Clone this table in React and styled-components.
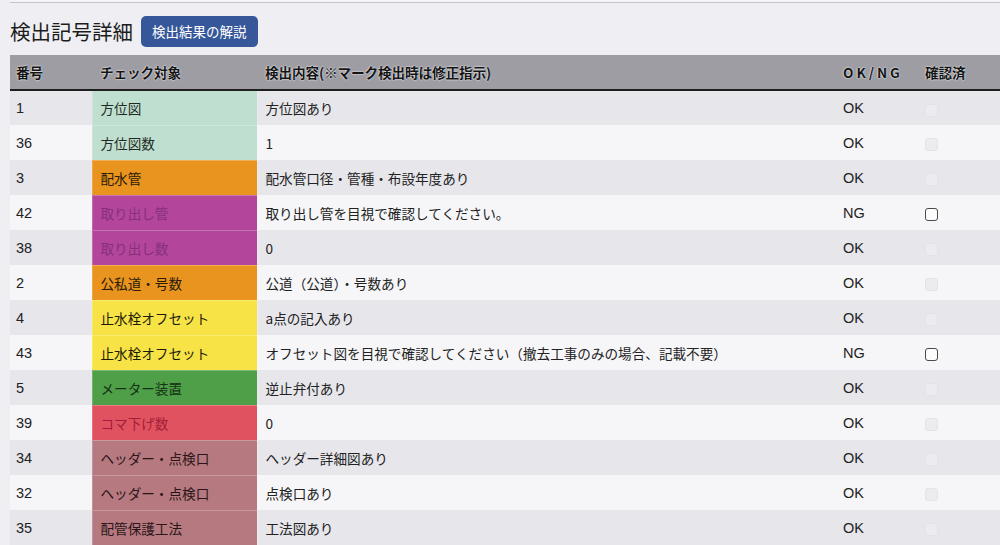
import React from 'react'
import styled, { createGlobalStyle } from 'styled-components'

const GlobalStyle = createGlobalStyle`
    body {
        margin: 0;
        background: #efeff3;
        font-family: "Noto Sans CJK JP", "Noto Sans", sans-serif;
        color: #222;
    }
`

const Page = styled.div`
    width: 1000px;
    height: 545px;
    overflow: hidden;
`

const TopPanel = styled.div`
    height: 2px;
    margin-left: 10px;
    border-bottom: 1px solid #c4c4ca;
    background: #f4f4f7;
`

const TitleBar = styled.div`
    display: flex;
    align-items: center;
    gap: 8px;
    height: 36px;
    margin: 10px 0 6px 10px;
`

const Title = styled.h2`
    margin: 0;
    font-size: 20.5px;
    font-weight: 400;
    color: #1c1c1c;
`

const ExplainButton = styled.button`
    height: 31px;
    padding: 0 11px;
    border: none;
    border-radius: 5px;
    background: #36589a;
    color: #fff;
    font-family: inherit;
    font-size: 13.5px;
`

const Table = styled.table`
    margin-left: 10px;
    width: 1000px;
    border-collapse: collapse;
    table-layout: fixed;
    font-size: 13.6px;
`

const HeadCell = styled.th`
    height: 34px;
    padding: 0 0 0 ${p => p.$pad || 8}px;
    background: #9d9da3;
    border-bottom: 2px solid #1e1e1e;
    text-align: left;
    font-weight: 700;
    font-size: 13.5px;
    color: #141414;
    text-shadow: 0 0 2px #fff, 0 0 1px #fff, 0.3px 0 0 #141414;
    letter-spacing: ${p => p.$spaced ? '3px' : '0'};
`

const Row = styled.tr`
    height: 35px;
    background: ${p => p.$odd ? '#f6f6f8' : '#e6e6eb'};
`

const Cell = styled.td`
    padding: 0 0 0 ${p => p.$pad || 8}px;
    white-space: nowrap;
    font-family: ${p => p.$latin ? '"Liberation Sans", "Noto Sans CJK JP", sans-serif' : 'inherit'};
    font-size: ${p => p.$latin ? '14.5px' : '13.6px'};
`

const TargetCell = styled.td`
    padding: 0 0 0 8px;
    white-space: nowrap;
    background: ${p => p.$bg};
    color: ${p => p.$fg};
    border-top: 1px solid rgba(255, 255, 255, 0.25);
    border-left: 1px solid rgba(255, 255, 255, 0.2);
    border-right: 1px solid rgba(255, 255, 255, 0.2);
`

const CheckBox = styled.span`
    display: inline-block;
    width: 11px;
    height: 11px;
    border-radius: 3px;
    vertical-align: middle;
    border: 1px solid ${p => p.$active ? '#4a4a4a' : '#e4e4e8'};
    background: ${p => p.$active ? '#fbfbfb' : '#ececf0'};
`

const colors = {
    mint: { bg: '#bfdfd0', fg: '#1f2a24' },
    orange: { bg: '#e8941f', fg: '#2a1a08' },
    magenta: { bg: '#b3469b', fg: '#86307c' },
    yellow: { bg: '#f7e346', fg: '#1c1a08' },
    green: { bg: '#4f9f49', fg: '#143214' },
    red: { bg: '#e0525f', fg: '#a41d3a' },
    rose: { bg: '#b67980', fg: '#2a1618' },
}

const rows = [
    { no: '1', target: '方位図', color: 'mint', detail: '方位図あり', result: 'OK' },
    { no: '36', target: '方位図数', color: 'mint', detail: '1', result: 'OK' },
    { no: '3', target: '配水管', color: 'orange', detail: '配水管口径・管種・布設年度あり', result: 'OK' },
    { no: '42', target: '取り出し管', color: 'magenta', detail: '取り出し管を目視で確認してください。', result: 'NG' },
    { no: '38', target: '取り出し数', color: 'magenta', detail: '0', result: 'OK' },
    { no: '2', target: '公私道・号数', color: 'orange', detail: '公道（公道）・号数あり', result: 'OK' },
    { no: '4', target: '止水栓オフセット', color: 'yellow', detail: 'a点の記入あり', result: 'OK' },
    { no: '43', target: '止水栓オフセット', color: 'yellow', detail: 'オフセット図を目視で確認してください（撤去工事のみの場合、記載不要）', result: 'NG' },
    { no: '5', target: 'メーター装置', color: 'green', detail: '逆止弁付あり', result: 'OK' },
    { no: '39', target: 'コマ下げ数', color: 'red', detail: '0', result: 'OK' },
    { no: '34', target: 'ヘッダー・点検口', color: 'rose', detail: 'ヘッダー詳細図あり', result: 'OK' },
    { no: '32', target: 'ヘッダー・点検口', color: 'rose', detail: '点検口あり', result: 'OK' },
    { no: '35', target: '配管保護工法', color: 'rose', detail: '工法図あり', result: 'OK' },
]

export default function App() {
    return (
        <Page>
            <GlobalStyle />
            <TopPanel />
            <TitleBar>
                <Title>検出記号詳細</Title>
                <ExplainButton>検出結果の解説</ExplainButton>
            </TitleBar>
            <Table>
                <colgroup>
                    <col style={{ width: 82 }} />
                    <col style={{ width: 165 }} />
                    <col style={{ width: 578 }} />
                    <col style={{ width: 82 }} />
                    <col style={{ width: 93 }} />
                </colgroup>
                <thead>
                    <tr>
                        <HeadCell $pad={6}>番号</HeadCell>
                        <HeadCell>チェック対象</HeadCell>
                        <HeadCell>検出内容(※マーク検出時は修正指示)</HeadCell>
                        <HeadCell $spaced>OK/NG</HeadCell>
                        <HeadCell>確認済</HeadCell>
                    </tr>
                </thead>
                <tbody>
                    {rows.map((row, index) => {
                        const c = colors[row.color]
                        return (
                            <Row $odd={index % 2 === 1} key={`row${index}`}>
                                <Cell $pad={6} $latin>{row.no}</Cell>
                                <TargetCell $bg={c.bg} $fg={c.fg}>{row.target}</TargetCell>
                                <Cell>{row.detail}</Cell>
                                <Cell $latin>{row.result}</Cell>
                                <Cell><CheckBox $active={row.result === 'NG'} /></Cell>
                            </Row>
                        )
                    })}
                </tbody>
            </Table>
        </Page>
    )
}
